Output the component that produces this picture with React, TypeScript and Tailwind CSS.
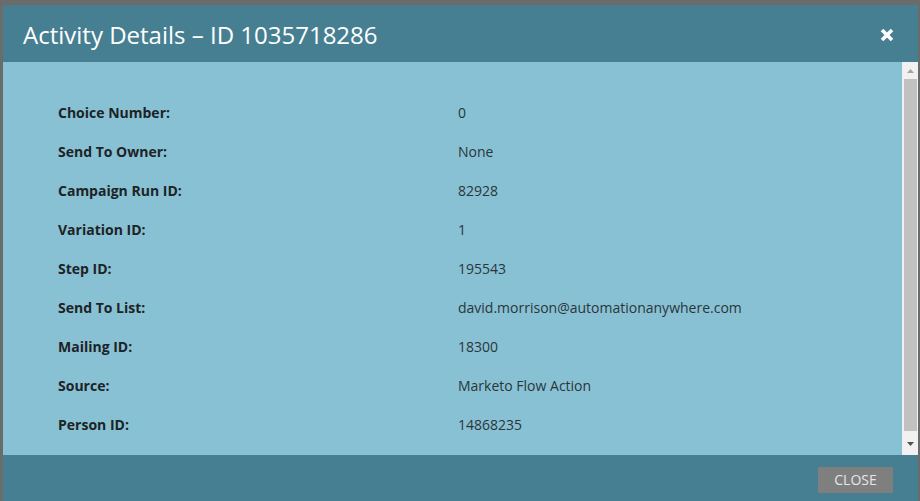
const rows: [string, string][] = [
  ["Choice Number:", "0"],
  ["Send To Owner:", "None"],
  ["Campaign Run ID:", "82928"],
  ["Variation ID:", "1"],
  ["Step ID:", "195543"],
  ["Send To List:", "david.morrison@automationanywhere.com"],
  ["Mailing ID:", "18300"],
  ["Source:", "Marketo Flow Action"],
  ["Person ID:", "14868235"],
];

const App = () => {
  return (
    <div className="w-[920px] h-[501px] bg-[#6b6b6b] pt-[5px] pl-[3px] pr-[2px] overflow-hidden font-['Open_Sans',sans-serif]">
      <div className="h-full flex flex-col">

        {/* HEADER */}
        <div className="h-[57px] shrink-0 bg-[#467f91] flex items-center justify-between pl-[20px] pr-[24px] pt-[2px]">
          <h1 className="text-white text-[24px] leading-none">Activity Details – ID 1035718286</h1>
          <button className="text-white">
            <svg width="14" height="14" viewBox="0 0 14 14">
              <path d="M2 2 L12 12 M12 2 L2 12" stroke="white" strokeWidth="3.6" strokeLinecap="butt" />
            </svg>
          </button>
        </div>

        {/* BODY */}
        <div className="flex-1 flex min-h-0 bg-[#88c1d3]">
          <div className="flex-1 pt-[41px] pl-[55px]">
            {rows.map(([label, value]) => (
              <div key={label} className="flex h-[39px] items-start text-[14px] leading-[20px]">
                <div className="w-[400px] font-bold text-[#1d2326]">{label}</div>
                <div className="text-[#2a363b]">{value}</div>
              </div>
            ))}
          </div>

          {/* SCROLLBAR */}
          <div className="w-[16px] bg-[#f1f1f1] flex flex-col">
            <div className="h-[17px] flex items-center justify-center">
              <svg width="7" height="4" viewBox="0 0 7 4"><path d="M3.5 0 L7 4 L0 4 Z" fill="#a3a3a3" /></svg>
            </div>
            <div className="flex-1 mx-[2px] mr-[1px] bg-[#c1c1c1]"></div>
            <div className="h-[24px] flex items-center justify-center pt-[2px]">
              <svg width="7" height="4" viewBox="0 0 7 4"><path d="M0 0 L7 0 L3.5 4 Z" fill="#505050" /></svg>
            </div>
          </div>
        </div>

        {/* FOOTER */}
        <div className="h-[46px] shrink-0 bg-[#467f91] flex justify-end items-start pt-[12px] pr-[25px]">
          <button className="w-[75px] h-[26px] bg-[#7f7f7f] text-[#e6e6e6] text-[14px] leading-none flex items-center justify-center">
            CLOSE
          </button>
        </div>

      </div>
    </div>
  );
};

export default App;
